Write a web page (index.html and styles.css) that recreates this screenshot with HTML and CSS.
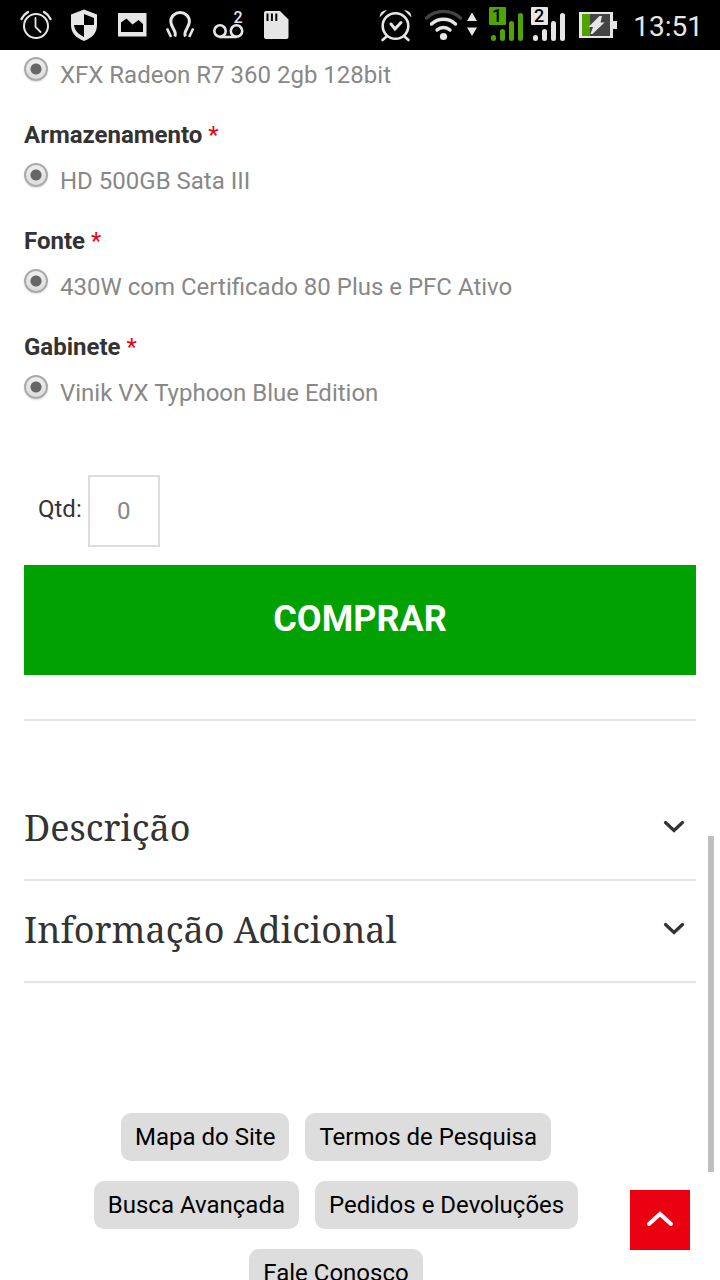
FILE: index.html
```html
<!DOCTYPE html>
<html lang="pt-BR">
<head>
<meta charset="utf-8">
<meta name="viewport" content="width=device-width, initial-scale=1">
<title>Comprar</title>
<link rel="stylesheet" href="styles.css">
</head>
<body>
<div class="screen">
  <header class="status">
    <div class="status-group notices">
      <svg width="32" height="32" viewBox="20 9 32 32" fill="none" stroke="#e6e6e6" stroke-linecap="round"><circle cx="36" cy="26" r="12" stroke-width="2"/><path d="M35.500 18v9l5 5" stroke-width="1.800"/><path d="M21.500 19a16 16 0 0 1 6.500-7M50.500 19a16 16 0 0 0-6.500-7" stroke-width="2.400"/></svg>
      <svg width="28" height="32" viewBox="70 9 28 32"><path d="M84 9.500L97 14.500V25c0 8-5 13-13 16-8-3-13-8-13-16V14.500Z" fill="#e6e6e6"/><path d="M84 14v11h10v-7zM74 25h10v12c-6-3-9.500-7-10-12z" fill="#000"/></svg>
      <svg width="31" height="26" viewBox="116 12 31 26"><path fill="#e6e6e6" d="M118 13h28.500v23.500H118z"/><path d="M121 32V22.500l5.500-4 6 6L138.500 20l4.500 4v8z" fill="#000"/></svg>
      <svg width="30" height="30" viewBox="165 10 30 30" fill="none" stroke="#e6e6e6"><path d="M174.800 36.500C177.500 31 170.800 28 170.800 21.500a9.300 9 0 0 1 18.600 0C189.400 28 182.700 31 185.400 36.500" stroke-width="3"/><path d="M167 28.500l4 8.500M193.200 28.500l-4 8.500" stroke-width="2.600"/></svg>
      <svg width="32" height="42" viewBox="213 4 32 42" fill="none" stroke="#e6e6e6" stroke-width="2.600"><circle cx="220" cy="31" r="5.700"/><circle cx="236.500" cy="31" r="5.700"/><path d="M219 37h18"/><text x="233.500" y="22.500" class="glyph" font-size="16" fill="#e6e6e6" stroke="none">2</text></svg>
      <svg width="26" height="30" viewBox="263 10 26 30"><path d="M266 11h14l8.500 8.500V37q0 2-2 2H266q-2 0-2-2V13q0-2 2-2z" fill="#e6e6e6"/><path d="M267.500 13.500v7.500M271.900 13.500v7.500M276.300 13.500v7.500" stroke="#000" stroke-width="2"/></svg>
    </div>
    <div class="status-group system">
      <svg width="34" height="34" viewBox="379 8 34 34" fill="none" stroke="#e6e6e6" stroke-width="2.600" stroke-linecap="round"><circle cx="395.500" cy="26" r="12.800"/><path d="M391 24l4 5 6-6.500" stroke-width="3"/><path d="M386 37l-3.500 3M405 37l3.500 3"/><path d="M379.500 17.500q0-7 7.500-7.500zM411.500 17.500q0-7-7.500-7.500z" fill="#e6e6e6" stroke="none"/></svg>
      <svg width="54" height="34" viewBox="424 8 54 34" fill="none" stroke="#e6e6e6" stroke-width="3.400" stroke-linecap="round"><path d="M426.500 18a25 25 0 0 1 34 0" stroke="#444"/><path d="M431.500 24a17.500 17.500 0 0 1 24 0M437 30a9.500 9.500 0 0 1 13 0"/><circle cx="443.500" cy="36.500" r="3.600" fill="#e6e6e6" stroke="none"/><path d="M467 21l5-8.500 5 8.500zM467 27.500l5 8.500 5-8.500z" fill="#e6e6e6" stroke="none"/></svg>
      <div class="signals">
        <svg width="35" height="38" viewBox="489 6 35 38"><rect x="489" y="7" width="17" height="18" rx="1" fill="#50a300"/><text x="492" y="22" class="glyph" font-size="18" fill="#000">1</text><path d="M493.500 37.500v1M502.500 31.500v7M511.500 23.500v15M520.500 15.500v23" stroke="#50a300" stroke-width="5" stroke-linecap="round"/></svg>
        <svg width="35" height="38" viewBox="531 6 35 38"><rect x="531" y="7" width="17" height="18" rx="1" fill="#e6e6e6"/><text x="534" y="22" class="glyph" font-size="18" fill="#000">2</text><path d="M535.500 37.500v1M544.500 31.500v7M553.500 23.500v15M562.500 15.500v23" stroke="#e6e6e6" stroke-width="5" stroke-linecap="round"/></svg>
      </div>
      <svg class="battery" width="38" height="28" viewBox="579 11 38 28"><path d="M579 12h34v9h4v8h-4v9h-34z" fill="#e6e6e6"/><path d="M582 14h28v22h-28z" fill="#444"/><path d="M582 14h8v22h-8z" fill="#50a300"/><path d="M599.500 16h2.500l-1.500 6.500h4L592.500 34h-2l2.500-7h-4.500z" fill="#e6e6e6"/></svg>
      <time class="clock">13:51</time>
    </div>
  </header>
  <main class="page">
    <form class="options">
      <label class="option"><input class="radio" type="radio" name="video" checked>XFX Radeon R7 360 2gb 128bit</label>
      <fieldset class="field">
        <legend class="field-name">Armazenamento <span class="required">*</span></legend>
        <label class="option"><input class="radio" type="radio" name="storage" checked>HD 500GB Sata III</label>
      </fieldset>
      <fieldset class="field">
        <legend class="field-name">Fonte <span class="required">*</span></legend>
        <label class="option"><input class="radio" type="radio" name="power" checked>430W com Certificado 80 Plus e PFC Ativo</label>
      </fieldset>
      <fieldset class="field">
        <legend class="field-name">Gabinete <span class="required">*</span></legend>
        <label class="option"><input class="radio" type="radio" name="case" checked>Vinik VX Typhoon Blue Edition</label>
      </fieldset>
      <div class="quantity">
        <label class="quantity-label" for="qty">Qtd:</label>
        <input class="quantity-input" id="qty" type="text" inputmode="numeric" value="0">
      </div>
      <button class="buy" type="submit">COMPRAR</button>
    </form>
    <section class="details">
      <button class="detail" type="button">Descrição
        <svg width="22" height="16" viewBox="0 0 22 16" fill="none" stroke="#333" stroke-width="3.200" stroke-linecap="round"><path d="M2.500 2.500l8.500 8 8.500-8"/></svg>
      </button>
      <button class="detail" type="button">Informação Adicional
        <svg width="22" height="16" viewBox="0 0 22 16" fill="none" stroke="#333" stroke-width="3.200" stroke-linecap="round"><path d="M2.500 2.500l8.500 8 8.500-8"/></svg>
      </button>
    </section>
    <nav class="links">
      <a class="link" href="#">Mapa do Site</a>
      <a class="link" href="#">Termos de Pesquisa</a>
      <a class="link" href="#">Busca Avançada</a>
      <a class="link" href="#">Pedidos e Devoluções</a>
      <a class="link" href="#">Fale Conosco</a>
    </nav>
  </main>
  <div class="scroll-thumb"></div>
  <button class="to-top" type="button" aria-label="Voltar ao topo">
    <svg width="28" height="20" viewBox="0 0 28 20" fill="none" stroke="#fff" stroke-width="4" stroke-linecap="round"><path d="M3 14l11-10 11 10"/></svg>
  </button>
</div>
</body>
</html>
```
FILE: styles.css
```css
* {
  box-sizing: border-box;
}

body {
  margin: 0;
  background: #fff;
  color: #333;
  font-family: Roboto, "Liberation Sans", sans-serif;
  font-size: 24px;
  line-height: 36px;
}

button,
input {
  font: inherit;
  color: inherit;
}

.screen {
  position: relative;
  display: flex;
  flex-direction: column;
  height: 100vh;
  overflow: hidden;
}

.status {
  flex: none;
  display: flex;
  justify-content: space-between;
  align-items: center;
  height: 50px;
  padding: 0 17px 0 20px;
  background: #000;
}

.status-group {
  display: flex;
  align-items: center;
}

.notices {
  gap: 18px;
}

.system {
  gap: 11px;
}

.signals {
  display: flex;
  gap: 7px;
}

.battery {
  margin-left: 2px;
}

.glyph {
  font-family: Roboto, sans-serif;
  font-weight: 500;
}

.clock {
  margin-left: 5px;
  padding-top: 3px;
  color: #e6e6e6;
  font-size: 28px;
}

.page {
  flex: 1;
  min-height: 0;
  overflow: hidden;
  padding: 7px 24px 0;
}

.options {
  display: flex;
  flex-direction: column;
}

.field {
  margin: 24px 0 0;
  padding: 0;
  border: 0;
}

.field-name {
  margin-bottom: 10px;
  padding: 0;
  font-weight: 700;
}

.required {
  color: #eb0015;
  font-weight: 400;
}

.option {
  display: flex;
  align-items: flex-start;
  gap: 12px;
  color: #888;
}

.radio {
  appearance: none;
  flex: none;
  width: 24px;
  height: 24px;
  margin: 0;
  border: 2px solid #aaa;
  border-radius: 50%;
  background: radial-gradient(circle, #666 5px, transparent 6px), linear-gradient(#eee, #ddd);
  box-shadow: 0 1px 2px #ddd;
}

.quantity {
  display: flex;
  align-items: center;
  gap: 6px;
  margin-top: 64px;
  padding-left: 14px;
}

.quantity-label {
  padding-bottom: 4px;
}

.quantity-input {
  width: 72px;
  height: 72px;
  padding: 0;
  border: 2px solid #ddd;
  border-radius: 0;
  background: #fff;
  color: #888;
  text-align: center;
}

.buy {
  margin-top: 18px;
  padding: 35px 0 37px;
  border: 0;
  background: #00a100;
  color: #fff;
  font-size: 36px;
  font-weight: 700;
  line-height: 38px;
}

.details {
  margin-top: 44px;
  padding-top: 58px;
  border-top: 2px solid #e4e4e4;
}

.detail {
  display: flex;
  justify-content: space-between;
  align-items: center;
  width: 100%;
  padding: 25px 11px 27px 0;
  border: 0;
  border-bottom: 2px solid #e4e4e4;
  background: none;
  font-family: "Noto Serif", "Droid Serif", "DejaVu Serif", serif;
  font-size: 36px;
  line-height: 48px;
  text-align: left;
}

.links {
  display: flex;
  flex-wrap: wrap;
  justify-content: center;
  gap: 20px 16px;
  margin: 130px 48px 0 0;
}

.link {
  padding: 6px 14px;
  border-radius: 10px;
  background: #ddd;
  color: #000;
  text-decoration: none;
}

.scroll-thumb {
  position: absolute;
  right: 6px;
  bottom: 108px;
  width: 6px;
  height: 336px;
  background: #bebebe;
}

.to-top {
  position: absolute;
  right: 30px;
  bottom: 30px;
  display: grid;
  place-items: center;
  width: 60px;
  height: 60px;
  padding: 0;
  border: 0;
  background: #eb0012;
}
```
